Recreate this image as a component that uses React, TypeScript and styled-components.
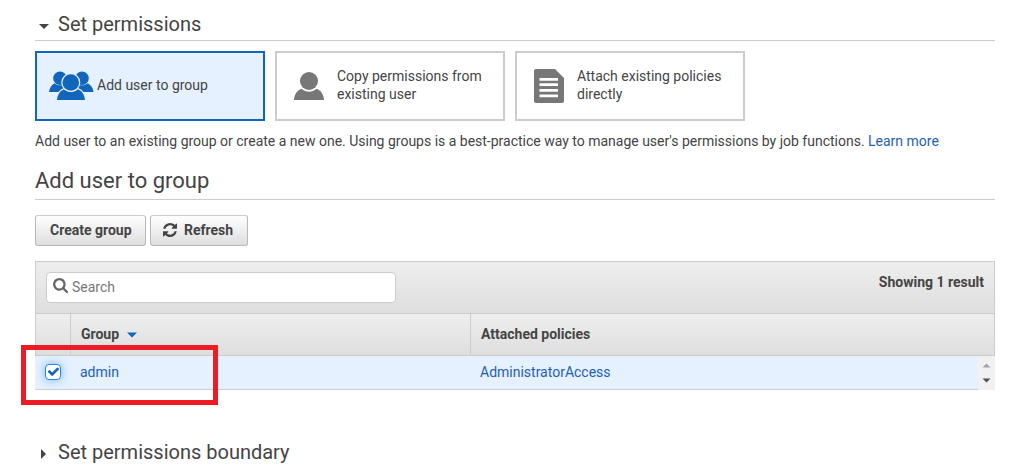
import React from "react";
import styled, { createGlobalStyle } from "styled-components";

const GlobalStyle = createGlobalStyle`
  * { box-sizing: border-box; }
  body {
    margin: 0;
    background: #fff;
    color: #444;
    font-family: Roboto, "Liberation Sans", sans-serif;
    font-size: 14px;
    line-height: 18px;
    overflow: hidden;
  }
`;

const Page = styled.main`
  width: 960px;
  height: 467px;
  margin-left: 35px;
  padding-top: 10px;
  overflow: visible;
`;

const SectionTitle = styled.h2<{ $ruled?: boolean }>`
  display: flex;
  align-items: center;
  height: ${(p) => (p.$ruled ? 31 : 30)}px;
  margin: 0;
  padding: 0 0 2px 4px;
  border-bottom: ${(p) => (p.$ruled ? "1px solid #ccc" : "none")};
  font-size: 20px;
  font-weight: 400;
  line-height: 28px;
`;

const Disclosure = styled.svg`
  width: 10px;
  height: 10px;
  margin: 4px 9px 0 0;
  fill: #444;
`;

const Options = styled.div`
  display: flex;
  gap: 10px;
  margin-top: 10px;
`;

const Option = styled.div<{ $selected?: boolean }>`
  display: flex;
  align-items: center;
  width: 230px;
  height: 70px;
  padding: 0 12px 2px;
  border: 2px solid ${(p) => (p.$selected ? "#1166bb" : "#ccc")};
  background: ${(p) => (p.$selected ? "#e5f1fe" : "#fff")};
  color: #444;

  svg {
    flex: none;
    fill: ${(p) => (p.$selected ? "#1166bb" : "#777")};
  }
`;

const OptionIcon = styled.span<{ $width: number; $inset?: number; $drop?: number }>`
  display: flex;
  flex: none;
  width: ${(p) => p.$width}px;
  padding-left: ${(p) => p.$inset ?? 0}px;
  padding-top: ${(p) => p.$drop ?? 0}px;
`;

const Hint = styled.p`
  margin: 11px 0 0;
  letter-spacing: -0.005px;
  white-space: nowrap;
`;

const Link = styled.a`
  color: #1f5fb0;
  text-decoration: none;
`;

const Heading = styled.h1`
  height: 39px;
  margin: 11px 0 0;
  padding-top: 7px;
  border-bottom: 1px solid #ccc;
  font-size: 22px;
  font-weight: 400;
  line-height: 26px;
`;

const Actions = styled.div`
  display: flex;
  gap: 4px;
  margin-top: 15px;
`;

const Button = styled.button<{ $width: number }>`
  display: flex;
  align-items: center;
  justify-content: flex-start;
  gap: 7px;
  width: ${(p) => p.$width}px;
  height: 31px;
  padding: 0 0 1px ${(p) => (p.$width > 100 ? 14 : 12)}px;
  border: 1px solid #b8b8b8;
  border-top-color: #ccc;
  border-radius: 3px;
  background: linear-gradient(#fff, #dedede);
  color: #444;
  font: 700 14px/18px Roboto, "Liberation Sans", sans-serif;
  white-space: nowrap;
`;

const Panel = styled.section`
  margin-top: 15px;
`;

const Toolbar = styled.div`
  display: flex;
  justify-content: space-between;
  height: 52px;
  padding: 10px 10px 0;
  border: 1px solid #ccc;
  border-bottom: 0;
  background: linear-gradient(#eee, #dedede);
`;

const SearchBox = styled.label`
  display: flex;
  align-items: center;
  width: 350px;
  height: 31px;
  padding: 0 0 2px 6px;
  border: 1px solid #ccc;
  border-radius: 4px;
  background: #fff;

  svg {
    margin: 0 4px 2px 0;
    fill: #666;
  }

  input {
    flex: 1;
    min-width: 0;
    padding: 0;
    border: 0;
    outline: 0;
    background: transparent;
    font: 14px/18px Roboto, "Liberation Sans", sans-serif;
  }

  input::placeholder { color: #777; }
`;

const Count = styled.strong`
  font-weight: 700;
  margin-top: 1px;
`;

const HeaderRow = styled.div`
  display: grid;
  grid-template-columns: 35px 400px 1fr;
  height: 43px;
  border: 1px solid #ccc;
  background: linear-gradient(#eee, #dedede);
`;

const HeaderCell = styled.div`
  display: flex;
  align-items: center;
  gap: 8px;
  padding: 0 0 2px 10px;
  font-weight: 700;

  svg { margin-top: 2px; }
  & + & { border-left: 1px solid #ccc; }
  &:nth-child(2) { margin-left: -1px; }
  &:nth-child(3) { margin-left: -1px; }
`;

const Body = styled.div`
  display: flex;
  height: 34px;
`;

const Row = styled.div`
  display: grid;
  grid-template-columns: 35px 400px 1fr;
  align-items: center;
  flex: 1;
  padding-bottom: 2px;
  border-bottom: 1px solid #ccc;
  background: #e5f1fe;
`;

const Cell = styled.div`
  padding-left: 10px;
`;

const Checkbox = styled.span`
  display: flex;
  align-items: center;
  justify-content: center;
  width: 16px;
  height: 16px;
  border: 1px solid #2b84dd;
  border-radius: 4px;
  background: #fff;
  box-shadow: 0 0 8px rgba(60, 150, 240, 0.65);

  svg { fill: #1166bb; }
`;

const Scrollbar = styled.div`
  display: flex;
  flex-direction: column;
  align-items: center;
  justify-content: space-between;
  width: 17px;
  padding: 7px 0;
  background: #f1f1f1;
`;

const Footer = styled.div`
  margin-top: 48px;
`;

const Highlight = styled.div`
  position: absolute;
  left: 21px;
  top: 345px;
  width: 197px;
  height: 60px;
  border: 5px solid #ed1c24;
  pointer-events: none;
`;

const GroupIcon = () => (
  <svg width="45" height="29" viewBox="0 0 45 29">
    <circle cx="11" cy="7.2" r="6.8" />
    <circle cx="33" cy="7.2" r="6.8" />
    <path d="M0 21C.4 17 2.6 13.6 5.6 12.2C9 15 13 15 17 12V21Z" />
    <path d="M44.6 21C44.2 17 41.8 13.6 38.6 12.2C35 15 31 15 27 12V21Z" />
    <g stroke="#e5f1fe" strokeWidth="2.4" paintOrder="stroke">
      <path d="M8 29C8.5 23.6 11 19.6 15.2 18.2C19 21.8 25 21.8 28.8 18.2C33 19.6 35.5 23.6 36 29Z" />
      <circle cx="21.8" cy="11.5" r="8.3" />
    </g>
  </svg>
);

const UserIcon = () => (
  <svg width="30" height="28" viewBox="0 0 30 28">
    <circle cx="15" cy="9" r="9" />
    <path d="M0 28C.3 23 3 18.2 7.5 16.8C11.8 20.8 18.2 20.8 22.5 16.8C27 18.2 29.7 23 30 28Z" />
  </svg>
);

const PolicyIcon = () => (
  <svg width="30" height="34" viewBox="0 0 30 34">
    <path
      fillRule="evenodd"
      d="M2 0H21L30 9V32a2 2 0 0 1-2 2H2a2 2 0 0 1-2-2V2a2 2 0 0 1 2-2ZM5.5 9v2.7h18.5V9ZM5.5 14.3v2.7h18.5v-2.7ZM5.5 20v2.7h18.5V20ZM5.5 25.5v2.7h18.5v-2.7Z"
    />
  </svg>
);

const RefreshIcon = () => (
  <svg width="14" height="14" viewBox="0 0 1536 1536" fill="#444">
    <path d="M1511 928q0 5-1 7-64 268-268 434.5T764 1536q-146 0-282.5-55T238 1324l-129 129q-19 19-45 19t-45-19-19-45V960q0-26 19-45t45-19h448q26 0 45 19t19 45-19 45l-137 137q71 66 161 102t187 36q134 0 250-65t186-179q11-17 53-117 8-23 30-23h192q13 0 22.5 9.5t9.5 22.5zm25-800v448q0 26-19 45t-45 19h-448q-26 0-45-19t-19-45 19-45l138-138Q969 256 768 256q-134 0-250 65T332 500q-11 17-53 117-8 23-30 23H50q-13 0-22.5-9.5T18 608v-7q65-268 270-434.5T768 0q146 0 284 55.5T1297 212l130-129q19-19 45-19t45 19 19 45z" />
  </svg>
);

const SearchIcon = () => (
  <svg width="15" height="15" viewBox="0 0 1664 1664">
    <path d="M1152 704q0-185-131.5-316.5T704 256 387.5 387.5 256 704t131.5 316.5T704 1152t316.5-131.5T1152 704zm512 832q0 52-38 90t-90 38q-54 0-90-38l-343-342q-179 124-399 124-143 0-273.5-55.5t-225-150-150-225T0 704t55.5-273.5 150-225 225-150T704 0t273.5 55.5 225 150 150 225T1408 704q0 220-124 399l343 343q37 37 37 90z" />
  </svg>
);

const CheckIcon = () => (
  <svg width="13" height="13" viewBox="0 0 1792 1792">
    <path d="M1671 566q0 40-28 68l-724 724-136 136q-28 28-68 28t-68-28l-136-136-362-362q-28-28-28-68t28-68l136-136q28-28 68-28t68 28l294 295 656-657q28-28 68-28t68 28l136 136q28 28 28 68z" />
  </svg>
);

export default function App() {
  return (
    <>
      <GlobalStyle />
      <Page>
        <SectionTitle $ruled>
          <Disclosure viewBox="0 0 10 10"><path d="M0 3H10L5 8Z" /></Disclosure>
          Set permissions
        </SectionTitle>

        <Options>
          <Option $selected>
            <OptionIcon $width={48}><GroupIcon /></OptionIcon>
            Add user to group
          </Option>
          <Option>
            <OptionIcon $width={48} $inset={5} $drop={2}><UserIcon /></OptionIcon>
            Copy permissions from<br />existing user
          </Option>
          <Option>
            <OptionIcon $width={48} $inset={5} $drop={2}><PolicyIcon /></OptionIcon>
            Attach existing policies<br />directly
          </Option>
        </Options>

        <Hint>
          Add user to an existing group or create a new one. Using groups is a best-practice way to manage user's
          permissions by job functions. <Link>Learn more</Link>
        </Hint>

        <Heading>Add user to group</Heading>

        <Actions>
          <Button $width={111}>Create group</Button>
          <Button $width={98}><RefreshIcon />Refresh</Button>
        </Actions>

        <Panel>
          <Toolbar>
            <SearchBox>
              <SearchIcon />
              <input placeholder="Search" />
            </SearchBox>
            <Count>Showing 1 result</Count>
          </Toolbar>
          <HeaderRow>
            <HeaderCell />
            <HeaderCell>
              Group
              <svg width="10" height="6" viewBox="0 0 10 6" fill="#1166bb"><path d="M0 .5H10L5 5.5Z" /></svg>
            </HeaderCell>
            <HeaderCell>Attached policies</HeaderCell>
          </HeaderRow>
          <Body>
            <Row>
              <Cell><Checkbox role="checkbox" aria-checked="true"><CheckIcon /></Checkbox></Cell>
              <Cell><Link>admin</Link></Cell>
              <Cell><Link>AdministratorAccess</Link></Cell>
            </Row>
            <Scrollbar>
              <svg width="9" height="5" viewBox="0 0 9 5" fill="#a3a3a3"><path d="M.5 4.5L4.5 .5L8.5 4.5Z" /></svg>
              <svg width="9" height="5" viewBox="0 0 9 5" fill="#505050"><path d="M.5 .5L4.5 4.5L8.5 .5Z" /></svg>
            </Scrollbar>
          </Body>
        </Panel>

        <Footer>
          <SectionTitle>
            <Disclosure viewBox="0 0 10 10"><path d="M2 0L7 5L2 10Z" /></Disclosure>
            Set permissions boundary
          </SectionTitle>
        </Footer>
        <Highlight />
      </Page>
    </>
  );
}
